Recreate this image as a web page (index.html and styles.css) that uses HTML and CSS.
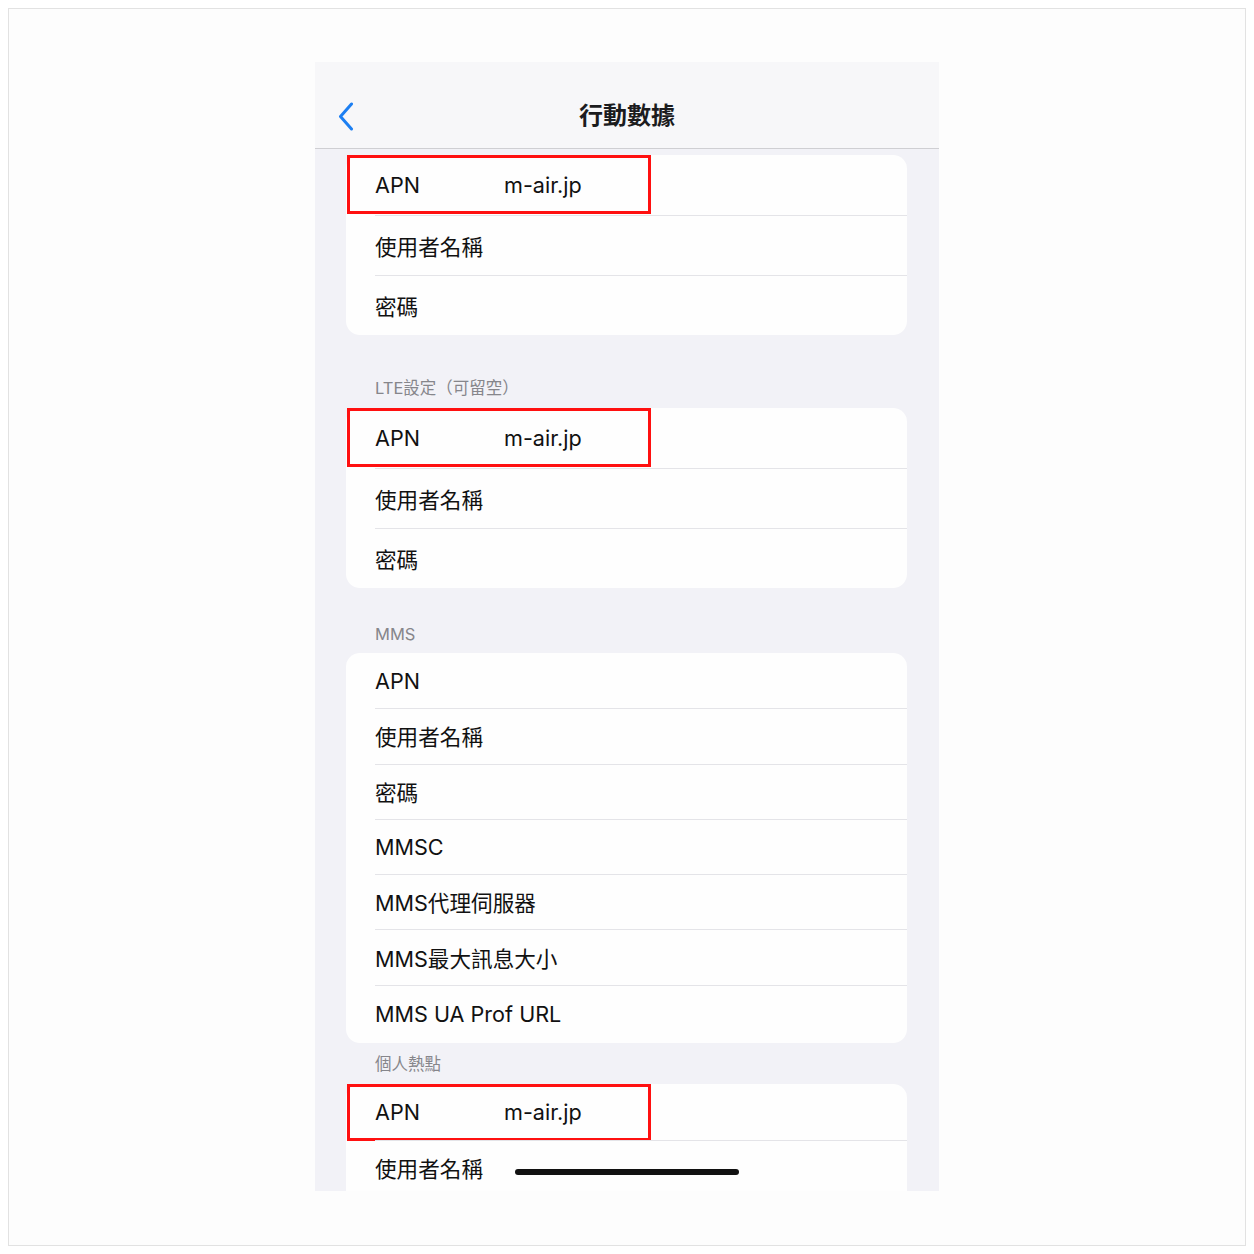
FILE: index.html
```html
<html>
<head>
  <meta charset="utf-8">
  <title>行動數據</title>
  <link rel="stylesheet" href="styles.css">
</head>
<body>
  <div class="frame">
    <div class="phone">
      <div class="nav">
        <a class="back" href="#!">
          <svg width="16" height="29" viewBox="0 0 16 29">
            <polyline points="13.5,2 2.5,14.5 13.5,27" fill="none" stroke="#1d7ff2" stroke-width="3" stroke-linecap="round" stroke-linejoin="round"/>
          </svg>
        </a>
        <h1>行動數據</h1>
      </div>

      <div class="content">
        <div class="group tall">
          <div class="row"><span class="label">APN</span><span class="value">m-air.jp</span><span class="mark"></span></div>
          <div class="row"><span class="label">使用者名稱</span></div>
          <div class="row"><span class="label">密碼</span></div>
        </div>

        <div class="section-title lte">LTE設定（可留空）</div>
        <div class="group tall">
          <div class="row"><span class="label">APN</span><span class="value">m-air.jp</span><span class="mark"></span></div>
          <div class="row"><span class="label">使用者名稱</span></div>
          <div class="row"><span class="label">密碼</span></div>
        </div>

        <div class="section-title mms">MMS</div>
        <div class="group compact">
          <div class="row"><span class="label">APN</span></div>
          <div class="row"><span class="label">使用者名稱</span></div>
          <div class="row"><span class="label">密碼</span></div>
          <div class="row"><span class="label">MMSC</span></div>
          <div class="row"><span class="label">MMS代理伺服器</span></div>
          <div class="row"><span class="label">MMS最大訊息大小</span></div>
          <div class="row"><span class="label">MMS UA Prof URL</span></div>
        </div>

        <div class="section-title hotspot">個人熱點</div>
        <div class="group hot">
          <div class="row"><span class="label">APN</span><span class="value">m-air.jp</span><span class="mark"></span></div>
          <div class="row"><span class="label">使用者名稱</span></div>
        </div>
      </div>

      <div class="home-bar"></div>
    </div>
  </div>
</body>
</html>
```

FILE: styles.css
```css
body {
  margin: 8px;
  background: #ffffff;
}
* {
  font-family: "Inter", "Noto Sans CJK TC", sans-serif;
  box-sizing: border-box;
}
.frame {
  width: 1238px;
  height: 1238px;
  border: 1px solid #e2e2e2;
  background: #fdfdfd;
  padding-top: 53px;
}
.phone {
  position: relative;
  width: 624px;
  height: 1129px;
  margin: 0 auto;
  overflow: hidden;
  background: #f2f2f7;
}

/* top navigation bar */
.nav {
  height: 87px;
  padding: 22px 0 0 23px;
  display: flex;
  align-items: center;
  background: #f7f7f9;
  border-bottom: 1px solid #cfcfd3;
  position: relative;
}
.back {
  display: flex;
}
.nav h1 {
  position: absolute;
  left: 0;
  right: 0;
  top: 37px;
  margin: 0;
  text-align: center;
  font-size: 24px;
  line-height: 34px;
  font-weight: 700;
  color: #1c1c1e;
}

.content {
  padding-top: 6px;
}

/* grouped list */
.group {
  margin: 0 32px 0 31px;
  background: #fefefe;
  border-radius: 14px;
}
.row {
  position: relative;
  display: flex;
  align-items: center;
  padding-left: 29px;
  font-size: 21.6px;
  color: #111111;
}
.row + .row::before {
  content: '';
  position: absolute;
  left: 29px;
  right: 0;
  top: 0;
  height: 1px;
  background: #e4e4e8;
}
.tall .row {
  height: 60px;
}
.compact .row {
  height: 55.3px;
}
.compact .row:last-child {
  height: 58px;
}
.hot {
  border-radius: 14px 14px 0 0;
}
.hot .row {
  height: 56px;
}
.label {
  width: 129px;
  white-space: nowrap;
}
.value {
  color: #111111;
}
.mark {
  position: absolute;
  left: 1px;
  top: 0;
  width: 304px;
  height: 59px;
  border: 3px solid #ff1010;
}
.hot .mark {
  height: 57px;
}

.section-title {
  padding: 0 29px 0 60px;
  font-size: 16.5px;
  line-height: 20px;
  color: #86868b;
}
.section-title.lte {
  padding-top: 43px;
  padding-bottom: 10px;
}
.section-title.mms {
  padding-top: 36px;
  padding-bottom: 9px;
}
.section-title.hotspot {
  padding-top: 11px;
  padding-bottom: 10px;
}

.home-bar {
  position: absolute;
  left: 200px;
  bottom: 16px;
  width: 224px;
  height: 6px;
  border-radius: 3px;
  background: #111111;
}
```
